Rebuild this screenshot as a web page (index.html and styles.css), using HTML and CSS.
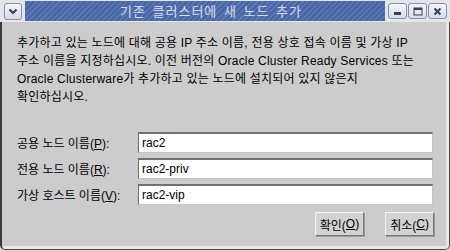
FILE: index.html
```html
<!DOCTYPE html>
<html lang="ko">
<head>
<meta charset="utf-8">
<title>기존 클러스터에 새 노드 추가</title>
<link rel="stylesheet" href="styles.css">
</head>
<body>
<div class="window">
  <div class="titlebar">
    <div class="menu-area">
      <div class="tbtn menu-btn">
        <svg width="10" height="7" viewBox="0 0 10 7"><path d="M1.5 1.5 L5 5 L8.5 1.5" fill="none" stroke="#34405c" stroke-width="2"/></svg>
      </div>
    </div>
    <div class="title-strip"><span class="title">기존 클러스터에 새 노드 추가</span></div>
    <div class="ctrl-area">
      <div class="tbtn">
        <svg width="9" height="9" viewBox="0 0 9 9"><rect x="1" y="5" width="7" height="3" fill="#34405c"/></svg>
      </div>
      <div class="tbtn">
        <svg width="10" height="9" viewBox="0 0 10 9"><rect x="1" y="1" width="8" height="7" fill="none" stroke="#34405c" stroke-width="1"/><rect x="1" y="1" width="8" height="2" fill="#34405c"/></svg>
      </div>
      <div class="tbtn">
        <svg width="9" height="9" viewBox="0 0 9 9"><path d="M1.5 1.5 L7.5 7.5 M7.5 1.5 L1.5 7.5" stroke="#34405c" stroke-width="2"/></svg>
      </div>
    </div>
  </div>
  <div class="frame">
    <div class="content">
      <p class="desc">추가하고 있는 노드에 대해 공용 IP 주소 이름, 전용 상호 접속 이름 및 가상 IP<br>주소 이름을 지정하십시오. 이전 버전의 Oracle Cluster Ready Services 또는<br>Oracle Clusterware가 추가하고 있는 노드에 설치되어 있지 않은지<br>확인하십시오.</p>
      <div class="form">
        <div class="row">
          <label class="lbl">공용 노드 이름(<u>P</u>):</label>
          <div class="field">rac2</div>
        </div>
        <div class="row">
          <label class="lbl">전용 노드 이름(<u>R</u>):</label>
          <div class="field">rac2-priv</div>
        </div>
        <div class="row">
          <label class="lbl">가상 호스트 이름(<u>V</u>):</label>
          <div class="field">rac2-vip</div>
        </div>
      </div>
      <div class="actions">
        <div class="btn">확인(<u>O</u>)</div>
        <div class="btn">취소(<u>C</u>)</div>
      </div>
    </div>
  </div>
</div>
</body>
</html>
```
FILE: styles.css
```css
* { box-sizing: border-box; }
html, body { margin: 0; padding: 0; }
body {
  width: 450px;
  height: 250px;
  background: #cccccc;
  font-family: "Liberation Sans", "Noto Sans CJK KR", sans-serif;
  font-size: 12px;
  color: #000;
  overflow: hidden;
}
.window {
  width: 450px;
  height: 250px;
  display: flex;
  flex-direction: column;
  background: #e6e6e6;
}
.titlebar {
  height: 22px;
  display: flex;
  background: #e2e5ec;
  border-bottom: 1px solid #e8e8e8;
}
.menu-area {
  width: 25px;
  padding: 3px 0 0 4px;
}
.ctrl-area {
  width: 65px;
  display: flex;
  gap: 1px;
  padding: 3px 0 0 3px;
}
.tbtn {
  width: 19px;
  height: 16px;
  border: 1px solid #8690a8;
  border-radius: 3px;
  background: linear-gradient(#f4f6fa, #d6dbe6);
  display: flex;
  align-items: center;
  justify-content: center;
}
.menu-btn { width: 18px; height: 17px; }
.title-strip {
  flex: 1;
  margin-top: 1px;
  height: 20px;
  background-color: #4f6cab;
  background-image: repeating-linear-gradient(135deg, #5b79b8 0px, #5b79b8 1.5px, #4a66a4 1.5px, #4a66a4 4px);
  display: flex;
  align-items: center;
  justify-content: center;
  padding-left: 12px;
}
.title {
  font-family: "Noto Sans CJK KR", sans-serif;
  font-size: 13px;
  letter-spacing: 1px;
  word-spacing: 2px;
  color: #d6dce9;
  line-height: 20px;
}
.frame {
  flex: 1;
  border-left: 2px solid #3a3a3a;
  border-right: 1px solid #4a4a4a;
  border-bottom: 1px solid #4a4a4a;
  border-radius: 0 0 5px 5px;
  padding: 0 3px 3px 0;
  background: #e8e8e8;
  display: flex;
}
.content {
  flex: 1;
  background: #cccccc;
  padding: 12px 12px 0 15px;
  display: flex;
  flex-direction: column;
}
.desc {
  margin: 0;
  line-height: 18px;
  letter-spacing: 0.2px;
  white-space: nowrap;
}
.form {
  margin-top: 26px;
  display: flex;
  flex-direction: column;
  gap: 5px;
}
.row {
  display: flex;
  align-items: center;
}
.lbl {
  width: 121px;
  white-space: nowrap;
}
.field {
  width: 295px;
  height: 21px;
  background: #fff;
  border-top: 2px solid #707070;
  border-left: 1px solid #6c6c6c;
  border-right: 1px solid #c4c4c4;
  border-bottom: 1px solid #c4c4c4;
  padding: 0 3px;
  line-height: 18px;
}
.actions {
  margin-top: 7px;
  display: flex;
  justify-content: flex-end;
  gap: 21px;
}
.btn {
  width: 49px;
  height: 24px;
  background: #d2d2d2;
  border: 1px solid #f2f2f2;
  border-right-color: #7a7a7a;
  border-bottom-color: #7a7a7a;
  box-shadow: 1px 1px 0 #9a9a9a;
  display: flex;
  align-items: center;
  justify-content: center;
}
```
